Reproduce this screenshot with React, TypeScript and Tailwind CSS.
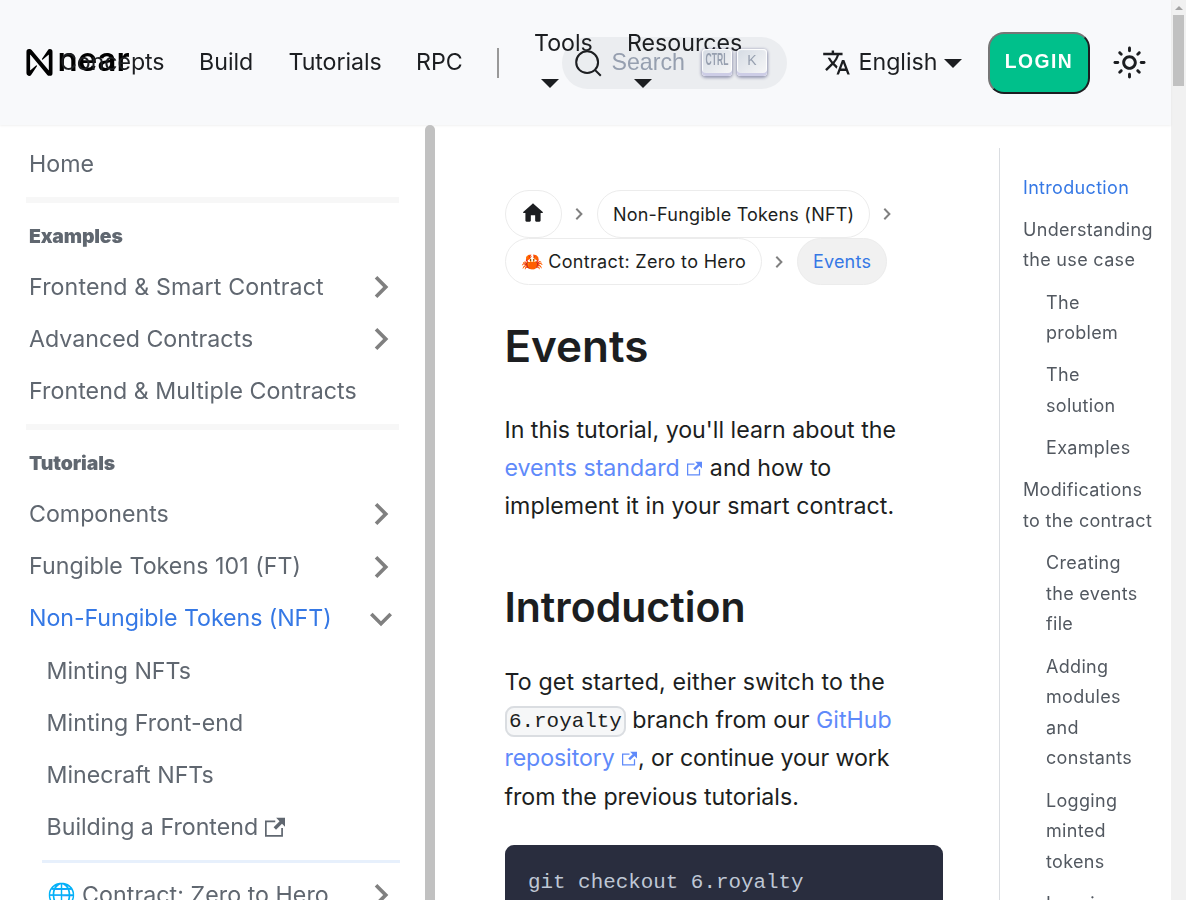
import React from "react";

function Chevron({ down = false }: { down?: boolean }) {
  return (
    <svg width="44" height="44" viewBox="0 0 24 24" className={down ? "-mr-[4px] shrink-0 rotate-90" : "-mr-[4px] shrink-0"}>
      <path fill="#808080" d="M8.59 16.59 13.17 12 8.59 7.41 10 6l6 6-6 6-1.41-1.41Z" />
    </svg>
  );
}

function ExternalIcon({ size }: { size: number }) {
  return (
    <svg width={size} height={size} viewBox="0 0 24 24" className="inline-block align-baseline">
      <path
        fill="currentColor"
        d="M21 13v10h-21v-19h12v2h-10v15h17v-8h2zm3-12h-10.988l4.035 4-6.977 7.07 2.828 2.828 6.977-7.07 4.125 4.172v-11z"
      />
    </svg>
  );
}

function Caret() {
  return <span className="block h-0 w-0 border-x-[9px] border-t-[9px] border-x-transparent border-t-[#1c1e21]" />;
}

function Key({ children }: { children: React.ReactNode }) {
  return (
    <span className="flex h-[27px] w-[30px] items-center justify-center rounded-[4px] bg-linear-to-br from-[#d5dbe4] to-[#f8f8f8] pb-[3px] text-[#969faf] shadow-[inset_0_-3px_0_0_#cdcde6,inset_0_0_1px_1px_#fff,0_1px_3px_1px_rgba(30,35,90,0.4)]">
      {children}
    </span>
  );
}

function Header() {
  return (
    <header className="relative flex h-[125px] shrink-0 items-center bg-[#f8f9fb] pl-[26px] text-[23.2px] text-[#1c1e21] shadow-[0_1px_2px_0_rgba(0,0,0,0.06)] will-change-transform">
      <div className="flex w-[34px] shrink-0 items-center whitespace-nowrap text-black">
        <svg width="27" height="27" viewBox="0 0 90 90" className="shrink-0">
          <path d="M72.2 4.6 53.4 32.5a2 2 0 0 0 3 2.6L74.9 19a.75.75 0 0 1 1.2.6v50.3a.75.75 0 0 1-1.3.5L18.9 3.5A8.7 8.7 0 0 0 12.2.4h-2A8.7 8.7 0 0 0 1.5 9.1v71.8a8.7 8.7 0 0 0 16.1 4.6l18.8-27.9a2 2 0 0 0-3-2.6L14.9 71a.75.75 0 0 1-1.2-.6V20a.75.75 0 0 1 1.3-.5l55.9 66.9a8.7 8.7 0 0 0 6.7 3.1h2a8.7 8.7 0 0 0 8.7-8.7V9.1A8.7 8.7 0 0 0 79.6.4a8.7 8.7 0 0 0-7.4 4.2Z" />
        </svg>
        <span className="ml-[4.5px] h-10 text-[33px] leading-[33px] font-semibold">near</span>
      </div>
      <a className="w-[139px] shrink-0 tracking-[-0.08px]">Concepts</a>
      <a className="w-[89.5px] shrink-0">Build</a>
      <a className="w-[127.5px] shrink-0 tracking-[-0.08px]">Tutorials</a>
      <a className="w-[81px] shrink-0">RPC</a>
      <span className="mr-[36px] h-[30px] w-[2px] shrink-0 bg-[#999]" />
      <a className="relative z-10 flex w-[92px] shrink-0 flex-col">
        <span className="-ml-px leading-[38px]">Tools</span>
        <span className="mt-[17px] mb-[13px] ml-[6px]"><Caret /></span>
      </a>
      <a className="relative z-10 flex w-[195px] shrink-0 flex-col">
        <span className="leading-[38px]">Resources</span>
        <span className="mt-[17px] mb-[13px] ml-[7px]"><Caret /></span>
      </a>
      <div className="absolute top-[37px] left-[562px] flex h-[52px] w-[225px] items-center rounded-full bg-[#ebedf0] pl-[12px]">
        <svg width="29" height="29" viewBox="0 0 20 20" fill="none" stroke="#1c1e21" strokeWidth="1.4" strokeLinecap="round">
          <path d="M14.386 14.386l4.0877 4.0877-4.0877-4.0877c-2.9418 2.9419-7.7115 2.9419-10.6533 0-2.9419-2.9418-2.9419-7.7115 0-10.6533 2.9418-2.9419 7.7115-2.9419 10.6533 0 2.9419 2.9418 2.9419 7.7115 0 10.6533z" />
        </svg>
        <span className="mb-px ml-[8.5px] w-[89.5px] font-['Liberation_Sans',sans-serif] text-[23.2px] text-[#969faf]">Search</span>
        <span className="relative z-20 mb-[2px] ml-px flex gap-[5px]">
          <Key><span className="scale-x-[0.57] scale-y-110 font-['Liberation_Sans',sans-serif] text-[15px] font-bold">CTRL</span></Key>
          <Key><span className="font-['Liberation_Sans',sans-serif] text-[14px]">K</span></Key>
        </span>
      </div>
      <svg width="29" height="29" viewBox="0 0 24 24" className="shrink-0">
        <path fill="#1c1e21" d="M12.87 15.07l-2.54-2.51.03-.03c1.74-1.94 2.98-4.17 3.71-6.53H17V4h-7V2H8v2H1v1.99h11.17C11.5 7.92 10.44 9.75 9 11.35 8.07 10.32 7.3 9.19 6.69 8h-2c.73 1.63 1.73 3.17 2.98 4.56l-5.09 5.02L4 19l5-5 3.11 3.11.76-2.04zM18.5 10h-2L12 22h2l1.12-3h4.75L21 22h2l-4.5-12zm-2.62 7l1.62-4.33L19.12 17h-3.24z" />
      </svg>
      <a className="ml-[7.5px] w-[85.5px] shrink-0">English</a>
      <span className="mr-[26px] shrink-0 pt-[2px]"><Caret /></span>
      <button className="h-[62px] w-[102px] shrink-0 rounded-[16px] border-2 border-t-[#767676] border-r-[#1c1e21] border-b-[#1c1e21] border-l-[#767676] bg-[#00c08b] font-['Liberation_Sans',sans-serif] text-[19.3px] font-bold tracking-[1.45px] text-white">
        LOGIN
      </button>
      <svg width="35" height="35" viewBox="0 0 24 24" className="ml-[22px] shrink-0">
        <path fill="#1c1e21" d="M12,9c1.65,0,3,1.35,3,3s-1.35,3-3,3s-3-1.35-3-3S10.35,9,12,9 M12,7c-2.76,0-5,2.24-5,5s2.24,5,5,5s5-2.24,5-5 S14.76,7,12,7L12,7z M2,13l2,0c0.55,0,1-0.45,1-1s-0.45-1-1-1l-2,0c-0.55,0-1,0.45-1,1S1.45,13,2,13z M20,13l2,0c0.55,0,1-0.45,1-1 s-0.45-1-1-1l-2,0c-0.55,0-1,0.45-1,1S19.45,13,20,13z M11,2v2c0,0.55,0.45,1,1,1s1-0.45,1-1V2c0-0.55-0.45-1-1-1S11,1.45,11,2z M11,20v2c0,0.55,0.45,1,1,1s1-0.45,1-1v-2c0-0.55-0.45-1-1-1C11.45,19,11,19.45,11,20z M5.99,4.58c-0.39-0.39-1.03-0.39-1.41,0 c-0.39,0.39-0.39,1.03,0,1.41l1.06,1.06c0.39,0.39,1.03,0.39,1.41,0s0.39-1.03,0-1.41L5.99,4.58z M18.36,16.95 c-0.39-0.39-1.03-0.39-1.41,0c-0.39,0.39-0.39,1.03,0,1.41l1.06,1.06c0.39,0.39,1.03,0.39,1.41,0c0.39-0.39,0.39-1.03,0-1.41 L18.36,16.95z M19.42,5.99c0.39-0.39,0.39-1.03,0-1.41c-0.39-0.39-1.03-0.39-1.41,0l-1.06,1.06c-0.39,0.39-0.39,1.03,0,1.41 s1.03,0.39,1.41,0L19.42,5.99z M7.05,18.36c0.39-0.39,0.39-1.03,0-1.41c-0.39-0.39-1.03-0.39-1.41,0l-1.06,1.06 c-0.39,0.39-0.39,1.03,0,1.41s1.03,0.39,1.41,0L7.05,18.36z" />
      </svg>
    </header>
  );
}

function Row({ label, arrow, active, sub }: { label: React.ReactNode; arrow?: "right" | "down"; active?: boolean; sub?: boolean }) {
  return (
    <li className={`flex h-[52.2px] shrink-0 items-center justify-between whitespace-nowrap pr-[17px] ${sub ? "pl-[46.5px]" : "pl-[29px]"} ${active ? "tracking-[-0.06px] text-[#3578e5]" : ""}`}>
      <span>{label}</span>
      {arrow && <Chevron down={arrow === "down"} />}
    </li>
  );
}

function Sidebar() {
  return (
    <aside className="flex h-[775px] w-[435px] shrink-0 overflow-hidden will-change-transform">
      <ul className="flex w-[425px] flex-col pt-[13px] pr-[9px] text-[23.2px] text-[#606770]">
        <Row label="Home" />
        <li className="mt-[6.5px] mr-[17px] ml-[26px] h-[6px] shrink-0 bg-[#f7f7f7]" />
        <li className="mt-[14px] mb-[5.5px] h-[39px] shrink-0 pl-[29px] text-[19.4px] leading-[39px] font-black tracking-[-0.15px]">Examples</li>
        <Row label={<span className="tracking-[0.12px]">Frontend &amp; Smart Contract</span>} arrow="right" />
        <Row label="Advanced Contracts" arrow="right" />
        <Row label={<span className="tracking-[0.06px]">Frontend &amp; Multiple Contracts</span>} />
        <li className="mt-[6.5px] mr-[17px] ml-[26px] h-[6px] shrink-0 bg-[#f7f7f7]" />
        <li className="mt-[14px] mb-[5px] h-[39px] shrink-0 pl-[29px] text-[19.4px] leading-[39px] font-black tracking-[-0.1px]">Tutorials</li>
        <Row label="Components" arrow="right" />
        <Row label={<span className="tracking-[0.05px]">Fungible Tokens 101 (FT)</span>} arrow="right" />
        <Row label="Non-Fungible Tokens (NFT)" arrow="down" active />
        <Row sub label="Minting NFTs" />
        <Row sub label={<span className="tracking-[0.04px]">Minting Front-end</span>} />
        <Row sub label="Minecraft NFTs" />
        <Row sub label={<span className="flex items-center gap-[6.5px]">Building a Frontend <ExternalIcon size={20.5} /></span>} />
        <li className="mt-[6.4px] mr-[16px] ml-[42px] h-[3px] shrink-0 bg-[#e7f0fc]" />
        <li className="h-[6px] shrink-0" />
        <Row sub label={<span className="tracking-[0.05px]">🌐 Contract: Zero to Hero</span>} arrow="right" />
      </ul>
      <div className="w-[10px] rounded-t-[5px] bg-[#c1c1c1]" />
    </aside>
  );
}

function Separator() {
  return (
    <svg width="12" height="14" viewBox="0 0 12 14" className="mx-[11.7px] mt-px shrink-0">
      <path d="M2.3 1.8 7.4 7l-5.1 5.2" fill="none" stroke="#808080" strokeWidth="2" />
    </svg>
  );
}

function Link({ children }: { children: React.ReactNode }) {
  return (
    <a className="mr-px text-[#5f8afa]">
      {children} <span className="ml-px"><ExternalIcon size={15} /></span>
    </a>
  );
}

const pill = "flex h-[47.5px] shrink-0 items-center rounded-full border border-[#ececec] px-[14.5px] pt-px";

function Article() {
  return (
    <main className="ml-[70px] w-[438px] shrink-0 pt-[65px] text-[23.2px] leading-[38.28px] text-[#1c1e21]">
      <nav className="text-[18px] leading-[30px] tracking-[0.22px] whitespace-nowrap">
        <div className="flex h-[47.5px] items-center">
          <span className={`${pill} w-[57px]`}>
            <svg width="26" height="26" viewBox="0 0 24 24" className="-ml-[0.5px] mb-[3px] shrink-0">
              <path d="M10 19v-5h4v5c0 .55.45 1 1 1h3c.55 0 1-.45 1-1v-7h1.7c.46 0 .68-.57.33-.87L12.67 3.6c-.38-.34-.96-.34-1.34 0l-8.36 7.53c-.34.3-.13.87.33.87H5v7c0 .55.45 1 1 1h3c.55 0 1-.45 1-1z" fill="#1c1e21" />
            </svg>
          </span>
          <Separator />
          <span className={`${pill} w-[273px]`}><span className="mt-px">Non-Fungible Tokens (NFT)</span></span>
          <Separator />
        </div>
        <div className="flex h-[47.5px] items-center">
          <span className={`${pill} w-[257px] tracking-[0.33px]`}>🦀 Contract: Zero to Hero</span>
          <Separator />
          <span className={`${pill} w-[90px] bg-[#f1f1f1] text-[#3578e5]`}>Events</span>
        </div>
      </nav>
      <h1 className="mt-[34px] -ml-[0.6px] text-[44px] leading-[55px] font-semibold">Events</h1>
      <p className="mt-[36.6px] -ml-[0.6px] whitespace-nowrap">
        In this tutorial, you'll learn about the<br />
        <Link>events standard</Link> and how to<br />
        <span className="tracking-[0.04px]">implement it in your smart contract.</span>
      </p>
      <h2 className="mt-[54.4px] -ml-[0.6px] text-[41px] leading-[54px] font-semibold">Introduction</h2>
      <p className="mt-[29px] -ml-[0.6px] whitespace-nowrap">
        <span className="tracking-[0.15px]">To get started, either switch to the</span><br />
        <code className="relative -top-px ml-[0.6px] rounded-[9px] border-2 border-[#dadde1] bg-[#f6f7f8] px-[2px] py-[2px] font-['Liberation_Mono',monospace] text-[20.9px] leading-none">6.royalty</code> branch from our <span className="text-[#5f8afa]">GitHub</span><br />
        <span className="tracking-[-0.1px]"><Link>repository</Link>, or continue your work</span><br />
        from the previous tutorials.
      </p>
      <pre className="mt-[29px] h-[80px] rounded-t-[9px] bg-[#292d3e] px-[23px] pt-[22px] font-['Liberation_Mono',monospace] text-[20.88px] leading-[32px] text-[#bfc7d5]">git checkout 6.royalty</pre>
    </main>
  );
}

function Toc() {
  const items: { lines: string[]; sub?: boolean; active?: boolean }[] = [
    { lines: ["Introduction"], active: true },
    { lines: ["Understanding", "the use case"] },
    { lines: ["The", "problem"], sub: true },
    { lines: ["The", "solution"], sub: true },
    { lines: ["Examples"], sub: true },
    { lines: ["Modifications", "to the contract"] },
    { lines: ["Creating", "the events", "file"], sub: true },
    { lines: ["Adding", "modules", "and", "constants"], sub: true },
    { lines: ["Logging", "minted", "tokens"], sub: true },
    { lines: ["Logging"], sub: true },
  ];
  return (
    <ul className="mt-[23px] ml-[56px] flex h-[752px] flex-1 flex-col gap-[11.6px] overflow-hidden border-l border-[#dadde1] pt-[24.7px] pl-[23px] text-[18px] leading-[30.6px] tracking-[0.32px] whitespace-nowrap text-[#525860] will-change-transform">
      {items.map((item, i) => (
        <li key={i} className={`shrink-0 ${item.sub ? "pl-[23px]" : ""} ${item.active ? "text-[#3578e5]" : ""}`}>
          {item.lines.map((line) => (
            <span key={line} className="block">{line}</span>
          ))}
        </li>
      ))}
    </ul>
  );
}

export default function App() {
  return (
    <div className="flex h-[900px] w-[1186px] overflow-hidden bg-white font-[Inter,sans-serif]">
      <div className="flex w-[1171px] shrink-0 flex-col">
        <Header />
        <div className="flex h-[775px] overflow-hidden">
          <Sidebar />
          <Article />
          <Toc />
        </div>
      </div>
      <div className="flex w-[15px] flex-col items-center bg-[#f1f1f1]">
        <span className="mt-[6px] h-0 w-0 border-x-4 border-b-4 border-x-transparent border-b-[#a3a3a3]" />
        <span className="mt-[5px] h-[71px] w-[11px] bg-[#c1c1c1]" />
      </div>
    </div>
  );
}
